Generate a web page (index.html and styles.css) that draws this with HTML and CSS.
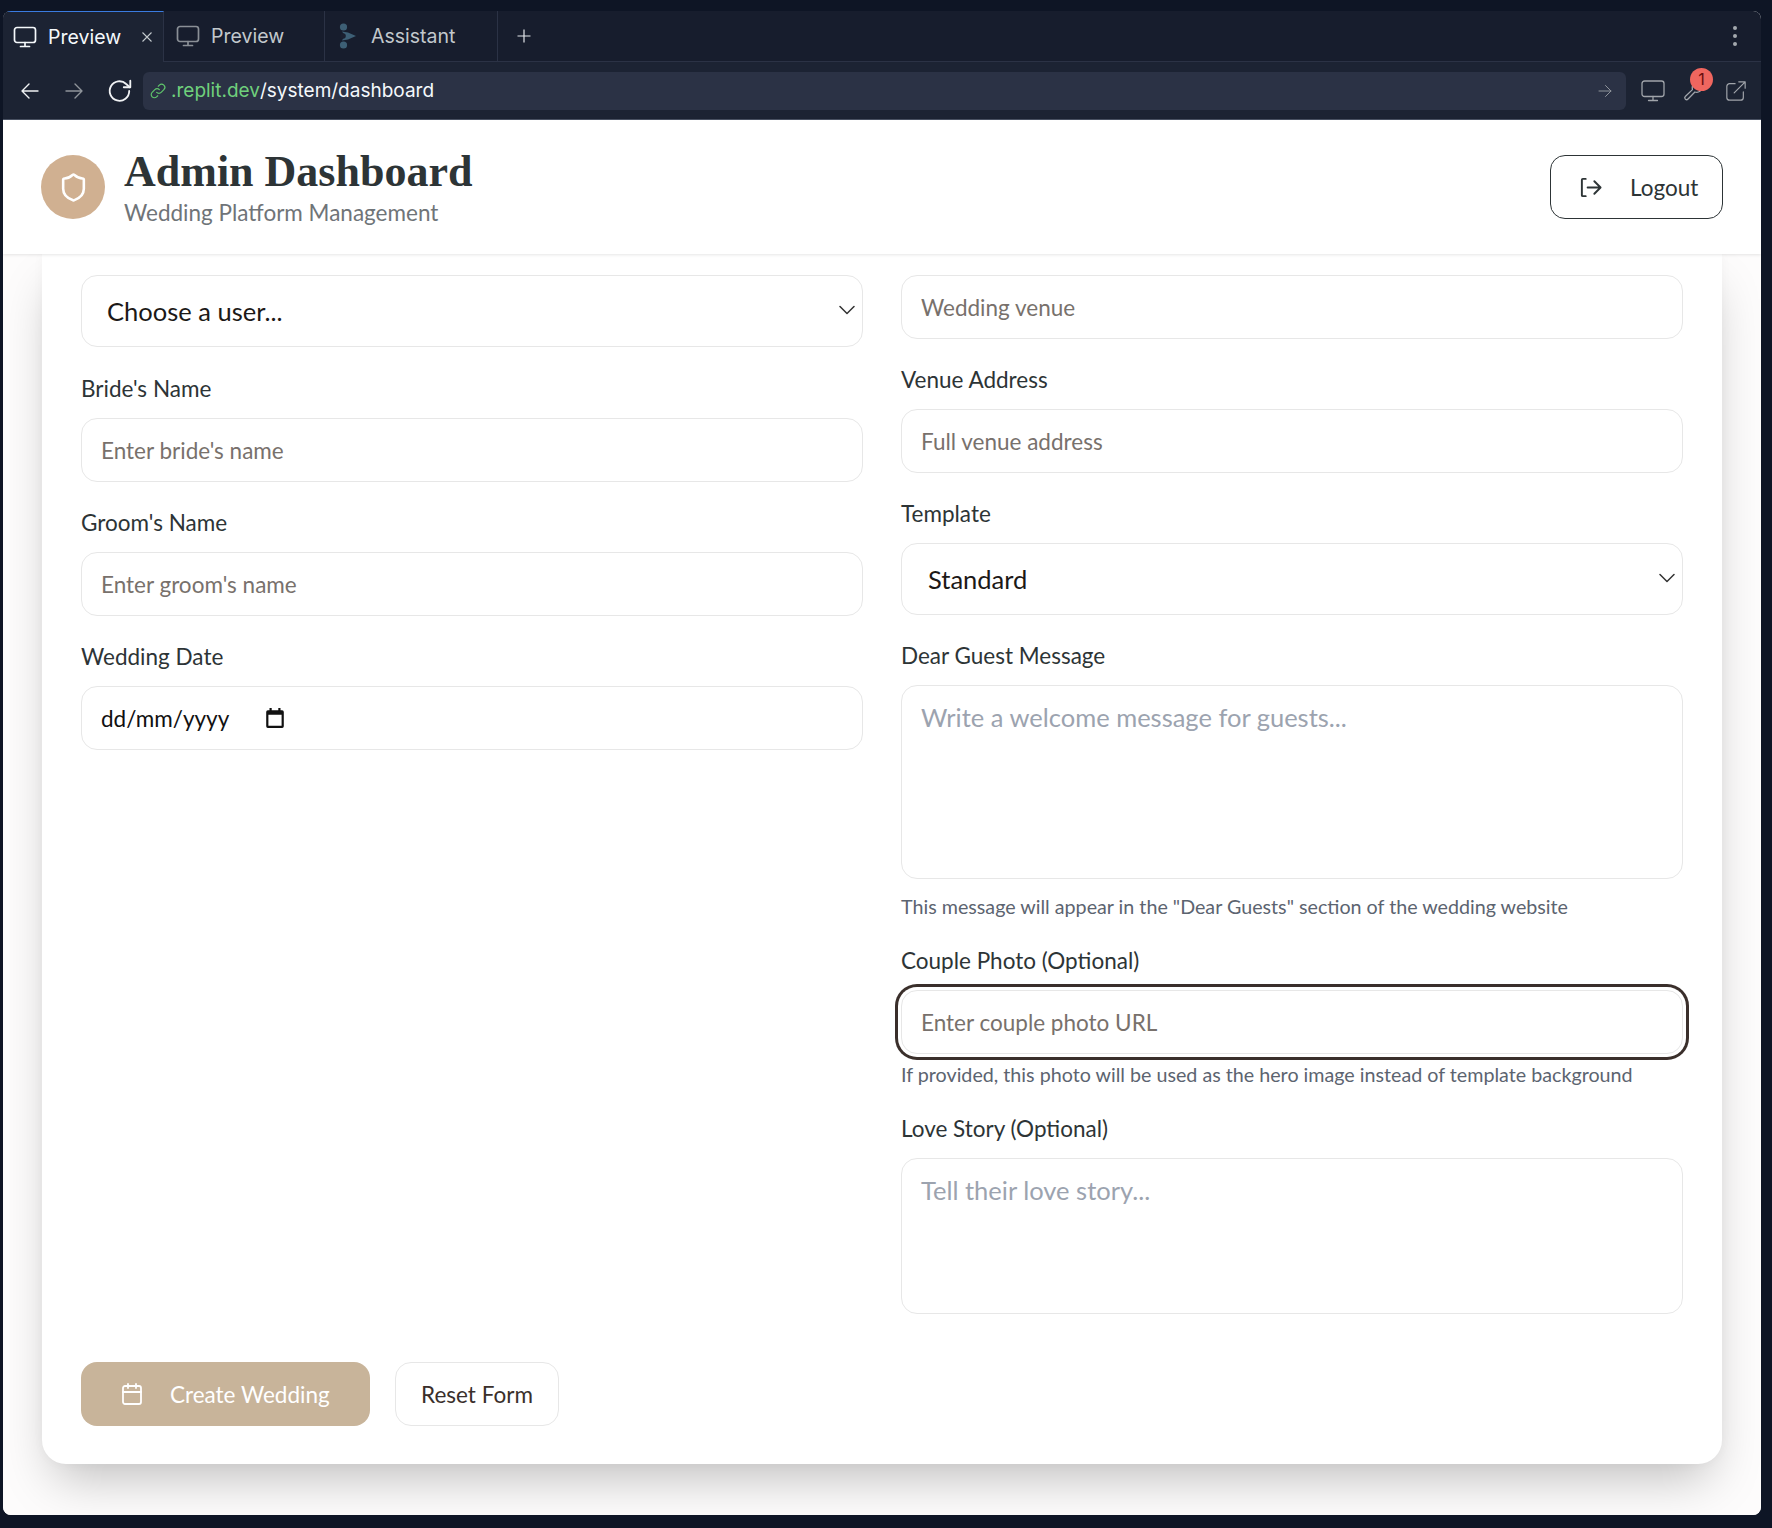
FILE: index.html
```html
<!DOCTYPE html>
<html lang="en">
<head>
    <meta charset="UTF-8">
    <title>Admin Dashboard</title>
    <link rel="stylesheet" href="styles.css">
</head>
<body>
    <div class="window">
        <div class="tabbar">
            <div class="tab tab-active">
                <svg class="tab-icon" viewBox="0 0 24 24" fill="none" stroke="currentColor" stroke-width="1.7" stroke-linecap="round" stroke-linejoin="round"><rect x="1.5" y="2.5" width="21" height="15" rx="2.5"/><path d="M12 17.5v4M7.5 21.5h9"/></svg>
                <span>Preview</span>
                <svg class="tab-close" viewBox="0 0 12 12" fill="none" stroke="currentColor" stroke-width="1.1"><path d="M1.5 1.5l9 9M10.5 1.5l-9 9"/></svg>
            </div>
            <div class="tab tab-dim">
                <svg class="tab-icon" viewBox="0 0 24 24" fill="none" stroke="currentColor" stroke-width="1.7" stroke-linecap="round" stroke-linejoin="round"><rect x="1.5" y="2.5" width="21" height="15" rx="2.5"/><path d="M12 17.5v4M7.5 21.5h9"/></svg>
                <span>Preview</span>
            </div>
            <div class="tab tab-dim tab-wide">
                <svg class="tab-logo" viewBox="0 0 18 26" fill="#3d5f75"><circle cx="4.5" cy="4" r="3.6"/><circle cx="4.5" cy="22" r="3.6"/><path d="M3 8.5l6 1 8 3.500-8 3.500-6 1a4.500 4.500 0 0 0 1.500-4.500A4.500 4.500 0 0 0 3 8.500z"/><circle cx="4" cy="13" r="2.800" fill="#1a2030"/></svg>
                <span>Assistant</span>
            </div>
            <svg class="tab-add" viewBox="0 0 14 14" fill="none" stroke="currentColor" stroke-width="1.200"><path d="M7 0.500v13M0.500 7h13"/></svg>
            <div class="tab-more"><i></i><i></i><i></i></div>
        </div>
        <div class="addressbar">
            <svg class="nav-icon" viewBox="0 0 20 20" fill="none" stroke="currentColor" stroke-width="1.400" stroke-linecap="round" stroke-linejoin="round"><path d="M18 10H2M9 3l-7 7 7 7"/></svg>
            <svg class="nav-icon nav-dim" viewBox="0 0 20 20" fill="none" stroke="currentColor" stroke-width="1.400" stroke-linecap="round" stroke-linejoin="round"><path d="M2 10h16M11 3l7 7-7 7"/></svg>
            <svg class="nav-icon nav-reload" viewBox="0 0 24 24" fill="none" stroke="currentColor" stroke-width="1.700" stroke-linecap="round" stroke-linejoin="round"><path d="M20.500 12a9 9 0 1 1-2.800-6.500L21 8.500"/><path d="M21.500 2.500v6h-6"/></svg>
            <div class="urlbox">
                <svg class="url-link" viewBox="0 0 20 20" fill="none" stroke="currentColor" stroke-width="1.300" stroke-linecap="round"><path d="M8.500 11.500a3.500 3.500 0 0 0 5 0l3-3a3.500 3.500 0 0 0-5-5l-1.200 1.200"/><path d="M11.500 8.500a3.500 3.500 0 0 0-5 0l-3 3a3.500 3.500 0 0 0 5 5l1.200-1.200"/></svg>
                <span class="url-host">.replit.dev</span><span class="url-path">/system/dashboard</span>
                <svg class="url-go" viewBox="0 0 14 14" fill="none" stroke="currentColor" stroke-width="1" stroke-linecap="round" stroke-linejoin="round"><path d="M1 7h12M7.500 1.500L13 7l-5.500 5.500"/></svg>
            </div>
            <svg class="bar-icon bar-screen" viewBox="0 0 24 24" fill="none" stroke="currentColor" stroke-width="1.300" stroke-linecap="round" stroke-linejoin="round"><rect x="1" y="2" width="22" height="15.500" rx="2.500"/><path d="M12 17.500v4M7.500 21.500h9"/></svg>
            <div class="bar-tools">
                <svg class="bar-icon" viewBox="0 0 24 24" fill="none" stroke="currentColor" stroke-width="1.400" stroke-linecap="round" stroke-linejoin="round"><path d="M21 7.500a6 6 0 0 1-8 5.600L5.500 20.800a2 2 0 0 1-3-2.800L10.300 10.500A6 6 0 0 1 17.500 3"/></svg>
                <span class="badge">1</span>
            </div>
            <svg class="bar-icon" viewBox="0 0 24 24" fill="none" stroke="currentColor" stroke-width="1.300" stroke-linecap="round" stroke-linejoin="round"><path d="M11 4H5a3 3 0 0 0-3 3v12a3 3 0 0 0 3 3h12a3 3 0 0 0 3-3v-6"/><path d="M10 14L22 2M15 2h7v7"/></svg>
        </div>
        <div class="page">
            <header class="header">
                <div class="brand">
                    <div class="brand-mark">
                        <svg viewBox="0 0 24 24" fill="none" stroke="#fff" stroke-width="2" stroke-linecap="round" stroke-linejoin="round"><path d="M20 13c0 5-3.500 7.500-7.660 8.950a1 1 0 0 1-.67-.01C7.500 20.500 4 18 4 13V6a1 1 0 0 1 1-1c2 0 4.500-1.200 6.240-2.720a1.170 1.170 0 0 1 1.520 0C14.510 3.810 17 5 19 5a1 1 0 0 1 1 1z"/></svg>
                    </div>
                    <div>
                        <h1 class="title">Admin Dashboard</h1>
                        <p class="subtitle">Wedding Platform Management</p>
                    </div>
                </div>
                <button class="logout" type="button">
                    <svg viewBox="0 0 24 24" fill="none" stroke="currentColor" stroke-width="2" stroke-linecap="round" stroke-linejoin="round"><path d="M7 3H4a1 1 0 0 0-1 1v16a1 1 0 0 0 1 1h3"/><path d="M9 12h13M16 5.500l6.500 6.500-6.500 6.500"/></svg>
                    Logout
                </button>
            </header>
            <main class="main">
                <form class="card">
                    <div class="columns">
                        <div class="column">
                            <div class="select-wrap select-user">
                                <select class="select"><option>Choose a user...</option></select>
                                <svg class="chevron" viewBox="0 0 16 10" fill="none" stroke="currentColor" stroke-width="1.500" stroke-linecap="round" stroke-linejoin="round"><path d="M1 1.500l7 7 7-7"/></svg>
                            </div>
                            <div class="field">
                                <label class="label">Bride's Name</label>
                                <input class="input" type="text" placeholder="Enter bride's name">
                            </div>
                            <div class="field">
                                <label class="label">Groom's Name</label>
                                <input class="input" type="text" placeholder="Enter groom's name">
                            </div>
                            <div class="field">
                                <label class="label">Wedding Date</label>
                                <div class="input date">
                                    <span>dd/mm/yyyy</span>
                                    <svg viewBox="0 0 20 20" fill="#111"><path d="M5 1h2v2h6V1h2v2h1.500A1.500 1.500 0 0 1 18 4.500v13a1.500 1.500 0 0 1-1.500 1.500h-13A1.500 1.500 0 0 1 2 17.500v-13A1.500 1.500 0 0 1 3.500 3H5zM4 7v10h12V7z"/></svg>
                                </div>
                            </div>
                        </div>
                        <div class="column">
                            <input class="input" type="text" placeholder="Wedding venue">
                            <div class="field">
                                <label class="label">Venue Address</label>
                                <input class="input" type="text" placeholder="Full venue address">
                            </div>
                            <div class="field">
                                <label class="label">Template</label>
                                <div class="select-wrap">
                                    <select class="select select-template"><option>Standard</option></select>
                                    <svg class="chevron" viewBox="0 0 16 10" fill="none" stroke="currentColor" stroke-width="1.500" stroke-linecap="round" stroke-linejoin="round"><path d="M1 1.500l7 7 7-7"/></svg>
                                </div>
                            </div>
                            <div class="field">
                                <label class="label">Dear Guest Message</label>
                                <textarea class="textarea textarea-message" placeholder="Write a welcome message for guests..."></textarea>
                                <p class="hint hint-message">This message will appear in the "Dear Guests" section of the wedding website</p>
                            </div>
                            <div class="field">
                                <label class="label">Couple Photo (Optional)</label>
                                <input class="input input-focus" type="text" placeholder="Enter couple photo URL">
                                <p class="hint hint-photo">If provided, this photo will be used as the hero image instead of template background</p>
                            </div>
                            <div class="field">
                                <label class="label">Love Story (Optional)</label>
                                <textarea class="textarea textarea-story" placeholder="Tell their love story..."></textarea>
                            </div>
                        </div>
                    </div>
                    <div class="actions">
                        <button class="btn btn-primary" type="button">
                            <svg viewBox="0 0 24 24" fill="none" stroke="currentColor" stroke-width="1.800" stroke-linecap="round" stroke-linejoin="round"><path d="M8 2v4M16 2v4"/><rect x="3" y="4" width="18" height="18" rx="2"/><path d="M3 10h18"/></svg>
                            Create Wedding
                        </button>
                        <button class="btn btn-reset" type="button">Reset Form</button>
                    </div>
                </form>
            </main>
        </div>
    </div>
</body>
</html>
```

FILE: styles.css
```css
* {
    box-sizing: border-box;
}
body {
    margin: 0;
    height: 1528px;
    padding: 11px 11px 13px 3px;
    background-color: #0e1525;
    font-family: "Lato", "Liberation Sans", sans-serif;
    overflow: hidden;
}
.window {
    height: 100%;
    display: flex;
    flex-direction: column;
    border-radius: 8px;
    overflow: hidden;
    background-color: #fff;
}

/* 탭 */
.tabbar {
    height: 51px;
    flex: none;
    display: flex;
    align-items: center;
    background-color: #171d2d;
    border-bottom: 1px solid #2b3245;
    font-family: "Inter", "Roboto", sans-serif;
    font-size: 19.5px;
}
.tab {
    height: 50px;
    display: flex;
    align-items: center;
    padding-left: 10px;
    border-right: 1px solid #2b3245;
}
.tab-active {
    width: 161px;
    height: 51px;
    color: #f5f9fc;
    background-color: #1c2333;
    border-top: 1px solid #3a7be0;
}
.tab-dim {
    width: 161px;
    color: #c2c8cc;
    padding-left: 12px;
}
.tab-wide {
    width: 173px;
    padding-left: 14px;
}
.tab-icon {
    width: 24px;
    height: 24px;
    margin-right: 11px;
}
.tab-dim .tab-icon {
    color: #8a8f96;
}
.tab-close {
    width: 12px;
    height: 12px;
    margin-left: 20px;
    color: #c2c8cc;
}
.tab-logo {
    width: 18px;
    height: 26px;
    margin-right: 14px;
}
.tab-add {
    width: 14px;
    height: 14px;
    margin-left: 19px;
    color: #e4e8ec;
}
.tab-more {
    margin-left: auto;
    margin-right: 24px;
    display: flex;
    flex-direction: column;
    gap: 4px;
}
.tab-more i {
    width: 4px;
    height: 4px;
    border-radius: 50%;
    background-color: #a4a9ae;
}

/* 주소창 */
.addressbar {
    height: 58px;
    flex: none;
    display: flex;
    align-items: center;
    padding: 0 14px 0 17px;
    background-color: #1c2333;
    border-bottom: 1px solid #4a5263;
}
.nav-icon {
    width: 20px;
    height: 20px;
    color: #f0f2f4;
    margin-right: 24px;
}
.nav-dim {
    color: #8f949b;
}
.nav-reload {
    width: 26px;
    height: 26px;
    margin-right: 10px;
    margin-left: -1px;
}
.urlbox {
    flex: 1;
    height: 38px;
    display: flex;
    align-items: center;
    padding: 0 14px 0 6px;
    border-radius: 6px;
    background-color: #2b3245;
    font-family: "Inter", "Roboto", sans-serif;
    font-size: 19px;
}
.url-link {
    width: 18px;
    height: 18px;
    margin-right: 4px;
    color: #5fc46b;
}
.url-host {
    color: #6fd07c;
}
.url-path {
    color: #f5f9fc;
}
.url-go {
    width: 14px;
    height: 14px;
    margin-left: auto;
    color: #8f949b;
}
.bar-icon {
    width: 22px;
    height: 24px;
    color: #a0a4aa;
    flex: none;
}
.bar-screen {
    margin-left: 15px;
    width: 24px;
}
.bar-tools {
    position: relative;
    margin-left: 18px;
    margin-right: 20px;
    height: 24px;
}
.badge {
    position: absolute;
    top: -11px;
    left: 7px;
    width: 23px;
    height: 23px;
    border-radius: 50%;
    background-color: #f0665f;
    color: #6b0d0d;
    font-family: "Inter", "Roboto", sans-serif;
    font-size: 16px;
    line-height: 23px;
    text-align: center;
}

/* 헤더 */
.page {
    flex: 1;
    min-height: 0;
    display: flex;
    flex-direction: column;
    background-color: #fdfcfc;
}
.header {
    height: 134px;
    flex: none;
    position: relative;
    z-index: 1;
    display: flex;
    align-items: center;
    justify-content: space-between;
    padding: 0 38px;
    background-color: #fff;
    box-shadow: 0 1px 3px rgba(0, 0, 0, 0.1);
}
.brand {
    display: flex;
    align-items: center;
    gap: 19px;
}
.brand-mark {
    width: 64px;
    height: 64px;
    border-radius: 50%;
    background-color: #d0b091;
    display: flex;
    align-items: center;
    justify-content: center;
}
.brand-mark svg {
    width: 31px;
    height: 31px;
}
.title {
    margin: 0;
    font-family: "Liberation Serif", serif;
    font-size: 44px;
    line-height: 50px;
    font-weight: 700;
    color: #2d3436;
}
.subtitle {
    margin: 2px 0 0;
    font-size: 22.500px;
    line-height: 28px;
    color: #6f7478;
}
.logout {
    width: 173px;
    height: 64px;
    display: flex;
    align-items: center;
    gap: 28px;
    padding: 0 0 0 28px;
    border: 1px solid #2d3436;
    border-radius: 15px;
    background-color: #fff;
    color: #2d3436;
    font-family: inherit;
    font-size: 22.500px;
}
.logout svg {
    width: 23px;
    height: 23px;
}

/* 폼 */
.main {
    flex: 1;
    padding: 0 39px;
}
.card {
    padding: 21px 39px 38px;
    background-color: #fff;
    border-radius: 0 0 24px 24px;
    box-shadow: 0 25px 50px -12px rgba(0, 0, 0, 0.25), 0 0 12px rgba(0, 0, 0, 0.03);
}
.columns {
    display: grid;
    grid-template-columns: 1fr 1fr;
    gap: 38px;
}
.column {
    display: flex;
    flex-direction: column;
    gap: 27px;
    min-width: 0;
}
.field {
    display: flex;
    flex-direction: column;
}
.label {
    height: 28px;
    margin-bottom: 15px;
    font-size: 22.500px;
    line-height: 28px;
    color: #2d3436;
}
.input,
.select,
.textarea {
    width: 100%;
    border: 1px solid #e7e7e7;
    border-radius: 16px;
    background-color: #fff;
    font-family: inherit;
    outline: none;
}
.input {
    height: 64px;
    padding: 0 19px;
    font-size: 22.500px;
    color: #2d3436;
}
.input::placeholder {
    color: #78716c;
    opacity: 1;
}
.input-focus {
    box-shadow: 0 0 0 3px #fff, 0 0 0 6px #3a2f2b;
}
.date {
    display: flex;
    align-items: center;
    gap: 35px;
    color: #111;
}
.date svg {
    width: 22px;
    height: 22px;
}
.select-wrap {
    position: relative;
}
.select {
    display: block;
    height: 72px;
    padding: 0 25px;
    appearance: none;
    font-size: 25.500px;
    color: #1c1917;
}
.select-user {
    margin-bottom: 1px;
}
.select-template {
    padding-left: 26px;
}
.chevron {
    position: absolute;
    right: 8px;
    top: 30px;
    width: 16px;
    height: 10px;
    color: #333;
}
.textarea {
    display: block;
    padding: 12px 19px;
    resize: none;
    font-size: 25.500px;
    line-height: 38px;
    color: #2d3436;
}
.textarea::placeholder {
    color: #9ca3af;
    opacity: 1;
}
.textarea-message {
    height: 194px;
}
.textarea-story {
    height: 156px;
}
.hint {
    margin: 0;
    font-size: 19.700px;
    line-height: 26px;
    color: #5c6470;
}
.hint-message {
    margin-top: 15px;
}
.hint-photo {
    margin-top: 8px;
}
.actions {
    display: flex;
    gap: 25px;
    margin-top: 48px;
}
.btn {
    height: 64px;
    display: flex;
    align-items: center;
    border-radius: 16px;
    font-family: inherit;
    font-size: 22.500px;
}
.btn svg {
    width: 24px;
    height: 24px;
}
.btn-primary {
    width: 289px;
    gap: 26px;
    padding: 0 0 0 39px;
    border: none;
    background-color: #c8b49a;
    color: #fff;
}
.btn-reset {
    width: 164px;
    justify-content: center;
    border: 1px solid #e7e7e7;
    background-color: #fff;
    color: #3a2f2b;
}
```
